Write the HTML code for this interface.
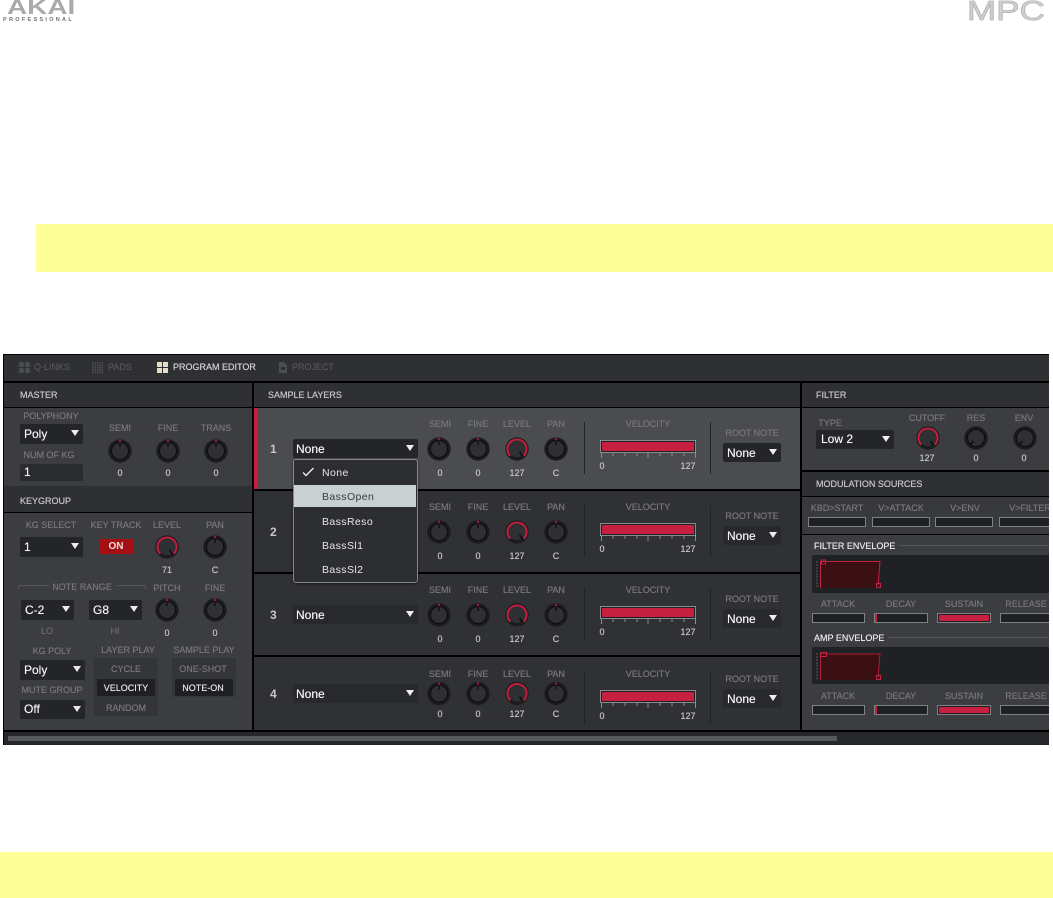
<!DOCTYPE html>
<html><head><meta charset="utf-8"><style>
html,body{margin:0;padding:0;background:#fff}
body{position:relative;width:1053px;height:898px;overflow:hidden;font-family:"Liberation Sans",sans-serif}
.a,.app div,.app span{position:absolute}
.app{position:absolute;left:3px;top:354px;width:1046px;height:391px;overflow:hidden;background:#000}
.in{position:absolute;left:-3px;top:-354px;width:1053px;height:898px}
.l{width:90px;margin-left:-45px;text-align:center;font-size:9px;line-height:10px;color:#77787c;white-space:nowrap;text-shadow:0 0 .4px #77787c}
.v{width:50px;margin-left:-25px;text-align:center;font-size:9px;line-height:10px;color:#c4c5c7;white-space:nowrap;text-shadow:0 0 .4px #c4c5c7}
.h{font-size:9px;line-height:10px;color:#c8c9cb;white-space:nowrap;text-shadow:0 0 .4px #c8c9cb}
.w{font-size:9px;line-height:10px;color:#ececec;white-space:nowrap;text-shadow:0 0 .4px #ececec}
.d{background:#242528;border-radius:2px;color:#f5f5f5;font-size:12px;white-space:nowrap;text-indent:4px;text-shadow:0 0 .4px #f5f5f5}
.d i{position:absolute;right:4px;top:50%;margin-top:-4px;width:0;height:0;border-left:4px solid transparent;border-right:4px solid transparent;border-top:6px solid #eee}
.b{background:#1f2023;border:1px solid #808184;box-sizing:border-box}
.m{left:322px;font-size:10.5px;letter-spacing:.4px;line-height:12px;color:#e6e6e6;white-space:nowrap}
.tab{font-size:9px;line-height:10px;top:362px;color:#55565a;white-space:nowrap;text-shadow:0 0 .4px #55565a}
.n{left:270px;font-size:12px;line-height:12px;font-weight:bold;color:#c6c6c8}
</style></head><body>
<div class="a" style="left:36px;top:224px;width:1017px;height:48px;background:#ffff99"></div>
<div class="a" style="left:0;top:852px;width:1053px;height:46px;background:#ffff99"></div>

<div class="a" style="left:7px;top:-3px;font-size:21px;line-height:21px;font-weight:bold;color:#a9aaac;transform-origin:0 0;transform:scaleX(1.33);white-space:nowrap">AKAI</div>
<div class="a" style="left:3px;top:17px;font-size:5.5px;line-height:6px;font-weight:bold;color:#6f7072;letter-spacing:2.3px;white-space:nowrap">PROFESSIONAL</div>
<div class="a" style="left:967px;top:-3px;font-size:28px;line-height:28px;color:#d0d1d3;-webkit-text-stroke:.8px #b4b5b7;transform-origin:0 0;transform:scaleX(1.25);white-space:nowrap">MPC</div>

<div class="app"><div class="in">
<!-- panels -->
<div style="left:4px;top:355px;width:1045px;height:26px;background:#2f3034"></div>
<div style="left:4px;top:383px;width:248px;height:24px;background:#2f3034"></div>
<div style="left:4px;top:408px;width:248px;height:78px;background:#3c3d41"></div>
<div style="left:4px;top:486px;width:248px;height:26px;background:#2f3034"></div>
<div style="left:4px;top:513px;width:248px;height:217px;background:#3c3d41"></div>
<div style="left:254px;top:383px;width:546px;height:24px;background:#2f3034"></div>
<div style="left:254px;top:408px;width:546px;height:81px;background:#4b4c50"></div>
<div style="left:254px;top:408px;width:4px;height:81px;background:#c5203f"></div>
<div style="left:254px;top:491px;width:546px;height:81px;background:#303135"></div>
<div style="left:254px;top:574px;width:546px;height:81px;background:#303135"></div>
<div style="left:254px;top:657px;width:546px;height:73px;background:#303135"></div>
<div style="left:802px;top:383px;width:247px;height:24px;background:#2f3034"></div>
<div style="left:802px;top:408px;width:247px;height:62px;background:#3c3d41"></div>
<div style="left:802px;top:472px;width:247px;height:24px;background:#2f3034"></div>
<div style="left:802px;top:497px;width:247px;height:37px;background:#38393d"></div>
<div style="left:802px;top:535px;width:247px;height:195px;background:#3c3d41"></div>
<div style="left:4px;top:732px;width:1045px;height:13px;background:#26272a"></div>
<div style="left:8px;top:736px;width:829px;height:5px;background:#57585c"></div>

<!-- tabs -->
<span class="tab" style="left:34px">Q-LINKS</span>
<span class="tab" style="left:108px">PADS</span>
<span class="tab" style="left:173px;color:#d4d4d4;text-shadow:0 0 .4px #d4d4d4">PROGRAM EDITOR</span>
<span class="tab" style="left:292px">PROJECT</span>

<!-- headers -->
<span class="h" style="left:20px;top:390px">MASTER</span>
<span class="h" style="left:20px;top:496px">KEYGROUP</span>
<span class="h" style="left:268px;top:390px">SAMPLE LAYERS</span>
<span class="h" style="left:816px;top:390px">FILTER</span>
<span class="h" style="left:816px;top:479px">MODULATION SOURCES</span>

<!-- master -->
<span class="l" style="left:51px;top:411px">POLYPHONY</span>
<div class="d" style="left:20px;top:424px;width:63px;height:20px;line-height:20px">Poly<i></i></div>
<span class="l" style="left:49px;top:450px">NUM OF KG</span>
<div class="d" style="left:20px;top:464px;width:63px;height:17px;line-height:17px;background:#2a2b2f">1</div>
<span class="l" style="left:120px;top:423px">SEMI</span>
<span class="l" style="left:168px;top:423px">FINE</span>
<span class="l" style="left:216px;top:423px">TRANS</span>
<span class="v" style="left:120px;top:468px">0</span>
<span class="v" style="left:168px;top:468px">0</span>
<span class="v" style="left:216px;top:468px">0</span>

<!-- keygroup -->
<span class="l" style="left:51px;top:520px">KG SELECT</span>
<span class="l" style="left:116px;top:520px">KEY TRACK</span>
<span class="l" style="left:167px;top:520px">LEVEL</span>
<span class="l" style="left:215px;top:520px">PAN</span>
<div class="d" style="left:20px;top:537px;width:63px;height:20px;line-height:20px">1<i></i></div>
<div style="left:99px;top:539px;width:34px;height:15px;background:#a50f13;color:#ecdcdc;font-size:10px;font-weight:bold;line-height:15px;text-align:center">ON</div>
<span class="v" style="left:167px;top:565px">71</span>
<span class="v" style="left:215px;top:565px">C</span>
<div style="left:18px;top:585px;width:30px;height:3px;border:1px solid #55565a;border-width:1px 0 0 1px;border-radius:2px 0 0 0"></div>
<div style="left:117px;top:585px;width:28px;height:3px;border:1px solid #55565a;border-width:1px 1px 0 0;border-radius:0 2px 0 0"></div>
<span class="l" style="left:82px;top:582px">NOTE RANGE</span>
<span class="l" style="left:167px;top:583px">PITCH</span>
<span class="l" style="left:215px;top:583px">FINE</span>
<div class="d" style="left:21px;top:600px;width:53px;height:20px;line-height:20px">C-2<i></i></div>
<div class="d" style="left:89px;top:600px;width:53px;height:20px;line-height:20px">G8<i></i></div>
<span class="l" style="left:47px;top:626px;color:#66676b">LO</span>
<span class="l" style="left:115px;top:626px;color:#66676b">HI</span>
<span class="v" style="left:167px;top:628px">0</span>
<span class="v" style="left:215px;top:628px">0</span>
<span class="l" style="left:52px;top:646px">KG POLY</span>
<span class="l" style="left:128px;top:645px">LAYER PLAY</span>
<span class="l" style="left:204px;top:645px">SAMPLE PLAY</span>
<div class="d" style="left:20px;top:660px;width:65px;height:20px;line-height:20px">Poly<i></i></div>
<span class="l" style="left:52px;top:685px">MUTE GROUP</span>
<div class="d" style="left:20px;top:700px;width:65px;height:19px;line-height:19px">Off<i></i></div>
<div style="left:94px;top:658px;width:64px;height:58px;background:#343539"></div>
<div style="left:97px;top:679px;width:58px;height:17px;background:#1f2023"></div>
<div style="left:172px;top:658px;width:64px;height:39px;background:#343539"></div>
<div style="left:175px;top:679px;width:58px;height:17px;background:#1f2023"></div>
<span class="l" style="left:126px;top:664px">CYCLE</span>
<span class="l" style="left:126px;top:683px;color:#e6e6e6;text-shadow:0 0 .4px #e6e6e6">VELOCITY</span>
<span class="l" style="left:126px;top:703px">RANDOM</span>
<span class="l" style="left:203px;top:664px">ONE-SHOT</span>
<span class="l" style="left:203px;top:683px;color:#e6e6e6;text-shadow:0 0 .4px #e6e6e6">NOTE-ON</span>

<!-- sample rows -->
<span class="n" style="top:443px">1</span>
<span class="n" style="top:526px">2</span>
<span class="n" style="top:609px">3</span>
<span class="n" style="top:688px">4</span>

<div class="d" style="left:293px;top:439px;width:125px;height:19px;line-height:20px;text-indent:3px">None<i></i></div>
<div class="d" style="left:293px;top:605px;width:125px;height:19px;line-height:20px;text-indent:3px;background:#28292c">None<i></i></div>
<div class="d" style="left:293px;top:684px;width:125px;height:19px;line-height:20px;text-indent:3px;background:#28292c">None<i></i></div>

<span class="l" style="left:440px;top:419px">SEMI</span><span class="l" style="left:478px;top:419px">FINE</span><span class="l" style="left:517px;top:419px">LEVEL</span><span class="l" style="left:556px;top:419px">PAN</span><span class="l" style="left:648px;top:419px">VELOCITY</span><span class="l" style="left:752px;top:428px">ROOT NOTE</span>
<span class="l" style="left:440px;top:502px">SEMI</span><span class="l" style="left:478px;top:502px">FINE</span><span class="l" style="left:517px;top:502px">LEVEL</span><span class="l" style="left:556px;top:502px">PAN</span><span class="l" style="left:648px;top:502px">VELOCITY</span><span class="l" style="left:752px;top:511px">ROOT NOTE</span>
<span class="l" style="left:440px;top:585px">SEMI</span><span class="l" style="left:478px;top:585px">FINE</span><span class="l" style="left:517px;top:585px">LEVEL</span><span class="l" style="left:556px;top:585px">PAN</span><span class="l" style="left:648px;top:585px">VELOCITY</span><span class="l" style="left:752px;top:594px">ROOT NOTE</span>
<span class="l" style="left:440px;top:669px">SEMI</span><span class="l" style="left:478px;top:669px">FINE</span><span class="l" style="left:517px;top:669px">LEVEL</span><span class="l" style="left:556px;top:669px">PAN</span><span class="l" style="left:648px;top:669px">VELOCITY</span><span class="l" style="left:752px;top:674px">ROOT NOTE</span>

<span class="v" style="left:440px;top:468px">0</span><span class="v" style="left:478px;top:468px">0</span><span class="v" style="left:517px;top:468px">127</span><span class="v" style="left:556px;top:468px">C</span>
<span class="v" style="left:440px;top:551px">0</span><span class="v" style="left:478px;top:551px">0</span><span class="v" style="left:517px;top:551px">127</span><span class="v" style="left:556px;top:551px">C</span>
<span class="v" style="left:440px;top:634px">0</span><span class="v" style="left:478px;top:634px">0</span><span class="v" style="left:517px;top:634px">127</span><span class="v" style="left:556px;top:634px">C</span>
<span class="v" style="left:440px;top:709px">0</span><span class="v" style="left:478px;top:709px">0</span><span class="v" style="left:517px;top:709px">127</span><span class="v" style="left:556px;top:709px">C</span>

<span class="v" style="left:602px;top:461px">0</span><span class="v" style="left:688px;top:461px">127</span>
<span class="v" style="left:602px;top:544px">0</span><span class="v" style="left:688px;top:544px">127</span>
<span class="v" style="left:602px;top:627px">0</span><span class="v" style="left:688px;top:627px">127</span>
<span class="v" style="left:602px;top:711px">0</span><span class="v" style="left:688px;top:711px">127</span>

<div class="d" style="left:723px;top:443px;width:58px;height:19px;line-height:20px">None<i></i></div>
<div class="d" style="left:723px;top:526px;width:58px;height:19px;line-height:20px;background:#28292c">None<i></i></div>
<div class="d" style="left:723px;top:609px;width:58px;height:19px;line-height:20px;background:#28292c">None<i></i></div>
<div class="d" style="left:723px;top:689px;width:58px;height:19px;line-height:20px;background:#28292c">None<i></i></div>

<!-- filter -->
<span class="l" style="left:830px;top:418px">TYPE</span>
<div class="d" style="left:816px;top:430px;width:78px;height:19px;line-height:19px;text-indent:5px">Low 2<i></i></div>
<span class="l" style="left:927px;top:413px">CUTOFF</span><span class="l" style="left:976px;top:413px">RES</span><span class="l" style="left:1024px;top:413px">ENV</span>
<span class="v" style="left:927px;top:453px">127</span><span class="v" style="left:976px;top:453px">0</span><span class="v" style="left:1024px;top:453px">0</span>

<span class="l" style="left:837px;top:503px">KBD&gt;START</span><span class="l" style="left:901px;top:503px">V&gt;ATTACK</span><span class="l" style="left:965px;top:503px">V&gt;ENV</span><span class="l" style="left:1030px;top:503px">V&gt;FILTER</span>
<div class="b" style="left:808px;top:517px;width:58px;height:10px"></div>
<div class="b" style="left:872px;top:517px;width:58px;height:10px"></div>
<div class="b" style="left:935px;top:517px;width:58px;height:10px"></div>
<div class="b" style="left:999px;top:517px;width:58px;height:10px"></div>

<span class="w" style="left:814px;top:541px">FILTER ENVELOPE</span>
<div style="left:899px;top:545px;width:150px;height:1px;background:#55565a"></div>
<div style="left:812px;top:555px;width:240px;height:38px;background:#202124;border-radius:2px"></div>
<span class="l" style="left:838px;top:599px">ATTACK</span><span class="l" style="left:901px;top:599px">DECAY</span><span class="l" style="left:964px;top:599px">SUSTAIN</span><span class="l" style="left:1026px;top:599px">RELEASE</span>
<div class="b" style="left:812px;top:613px;width:53px;height:10px"></div>
<div class="b" style="left:874px;top:613px;width:54px;height:10px"><div style="left:0;top:0;width:2px;height:8px;background:#c5203f"></div></div>
<div class="b" style="left:937px;top:613px;width:54px;height:10px"><div style="left:1px;top:1px;width:50px;height:6px;background:#c5203f"></div></div>
<div class="b" style="left:1000px;top:613px;width:54px;height:10px"></div>

<span class="w" style="left:814px;top:633px">AMP ENVELOPE</span>
<div style="left:888px;top:637px;width:161px;height:1px;background:#55565a"></div>
<div style="left:812px;top:647px;width:240px;height:37px;background:#202124;border-radius:2px"></div>
<span class="l" style="left:838px;top:691px">ATTACK</span><span class="l" style="left:901px;top:691px">DECAY</span><span class="l" style="left:964px;top:691px">SUSTAIN</span><span class="l" style="left:1026px;top:691px">RELEASE</span>
<div class="b" style="left:812px;top:705px;width:53px;height:10px"></div>
<div class="b" style="left:874px;top:705px;width:54px;height:10px"><div style="left:0;top:0;width:2px;height:8px;background:#c5203f"></div></div>
<div class="b" style="left:937px;top:705px;width:54px;height:10px"><div style="left:1px;top:1px;width:50px;height:6px;background:#c5203f"></div></div>
<div class="b" style="left:1000px;top:705px;width:54px;height:10px"></div>

<!-- graphics overlay -->
<svg style="position:absolute;left:0;top:0" width="1053" height="898" viewBox="0 0 1053 898">
<defs>
<g id="kn"><circle r="11.7" fill="#1b1c1f"/><circle r="8.6" fill="#2f3034" stroke="#0e0e10" stroke-width="1.2"/><rect x="-.7" y="-11.3" width="1.4" height="2.6" fill="#c5203f"/><path d="M0-8V-4" stroke="#0e0e10" stroke-width="1.4"/></g>
<g id="kr"><circle r="11.7" fill="#1b1c1f"/><circle r="8.2" fill="#2f3034"/><path d="M-6.7 6.7A9.5 9.5 0 1 1 6.7 6.7" fill="none" stroke="#c5203f" stroke-width="2"/><path d="M2.5 3L5.5 7" stroke="#0e0e10" stroke-width="1.8"/></g>
<g id="kz"><circle r="11.7" fill="#1b1c1f"/><circle r="8.6" fill="#2f3034" stroke="#0e0e10" stroke-width="1.2"/><path d="M-2.5 3L-5.5 6.5" stroke="#0e0e10" stroke-width="1.6"/></g>
<g id="vel"><rect x="600.5" y="440.5" width="95" height="12" fill="#1f2023" stroke="#8b8c8f"/><rect x="602" y="442" width="92" height="9" fill="#c5203f"/><path d="M601.5 453v5M613 453v3M625 453v3M637 453v3M648 453v5M660 453v3M672 453v3M684 453v3M695.5 453v5" stroke="#8b8c8f" fill="none"/><path d="M584.5 422v52M710.5 422v52" stroke="#222326" fill="none"/></g>
<g id="tk"><path d="M816 0h2M816 3h2M816 6h2M816 9h2M816 12h2M816 15h2M816 18h2M816 21h2M816 24h2" stroke="#5a5b5f" fill="none"/></g>
</defs>
<!-- tab icons -->
<g fill="#4c4d51"><rect x="19" y="362" width="5" height="5" rx="2"/><rect x="25" y="362" width="5" height="5" rx="2"/><rect x="19" y="368" width="5" height="5" rx="2"/><rect x="25" y="368" width="5" height="5" rx="2"/></g>
<g stroke="#4c4d51" stroke-width="1.6" stroke-dasharray="1.6 .8" fill="none"><path d="M92 363h11M92 365.4h11M92 367.8h11M92 370.2h11M92 372.6h11"/></g>
<g fill="#e4dcc4"><rect x="157" y="362" width="5" height="5"/><rect x="163" y="362" width="5" height="5"/><rect x="157" y="368" width="5" height="5"/><rect x="163" y="368" width="5" height="5"/></g>
<path d="M279 362h5l3 3v8h-8z" fill="#4c4d51"/><rect x="281" y="367" width="4" height="3" fill="#2f3034"/>
<!-- knobs -->
<use href="#kn" x="120" y="451"/><use href="#kn" x="168" y="451"/><use href="#kn" x="216" y="451"/>
<use href="#kr" x="167" y="547"/><use href="#kn" x="215" y="547"/>
<use href="#kn" x="167" y="610"/><use href="#kn" x="215" y="610"/>
<use href="#kn" x="439" y="449"/><use href="#kn" x="478" y="449"/><use href="#kr" x="517" y="449"/><use href="#kn" x="556" y="449"/>
<use href="#kn" x="439" y="532"/><use href="#kn" x="478" y="532"/><use href="#kr" x="517" y="532"/><use href="#kn" x="556" y="532"/>
<use href="#kn" x="439" y="615"/><use href="#kn" x="478" y="615"/><use href="#kr" x="517" y="615"/><use href="#kn" x="556" y="615"/>
<use href="#kn" x="439" y="693.5"/><use href="#kn" x="478" y="693.5"/><use href="#kr" x="517" y="693.5"/><use href="#kn" x="556" y="693.5"/>
<use href="#kr" x="928" y="438"/><use href="#kz" x="976" y="438"/><use href="#kz" x="1025" y="438"/>
<!-- velocity -->
<use href="#vel"/><use href="#vel" y="83"/><use href="#vel" y="166"/><use href="#vel" y="250"/>
<!-- envelopes -->
<use href="#tk" y="562"/><use href="#tk" y="654"/>
<path d="M820.5 588V561.5H880L878 588Z" fill="#3a1012"/>
<path d="M820.5 588V561.5H880L878 585" fill="none" stroke="#c5203f" stroke-width="1"/>
<rect x="821.5" y="560" width="4" height="4" fill="none" stroke="#c5203f"/><rect x="876.5" y="583.5" width="4" height="4" fill="none" stroke="#c5203f"/>
<path d="M820.5 680V654H880L878 680Z" fill="#3a1012"/>
<path d="M820.5 680V654H880L878 677" fill="none" stroke="#a81c38" stroke-width="1"/>
<rect x="820.5" y="652.5" width="6" height="4" fill="none" stroke="#c5203f"/><rect x="876.5" y="675.5" width="4" height="4" fill="none" stroke="#c5203f"/>
</svg>

<!-- dropdown menu -->
<div style="left:293px;top:459px;width:123px;height:122px;background:#2d2e32;border:1px solid #85878a;border-radius:3px;box-shadow:0 1px 2px #0008"></div>
<div style="left:294px;top:485px;width:122px;height:22px;background:#c9d0d2"></div>
<svg style="position:absolute;left:302px;top:467px" width="13" height="10" viewBox="0 0 13 10"><path d="M1 5.5L4 8.5L11.5 1" fill="none" stroke="#ececec" stroke-width="1.4"/></svg>
<span class="m" style="top:467px">None</span>
<span class="m" style="top:491px;color:#3a3b3f">BassOpen</span>
<span class="m" style="top:516px">BassReso</span>
<span class="m" style="top:540px">BassSl1</span>
<span class="m" style="top:564px">BassSl2</span>
</div></div>
</body></html>
